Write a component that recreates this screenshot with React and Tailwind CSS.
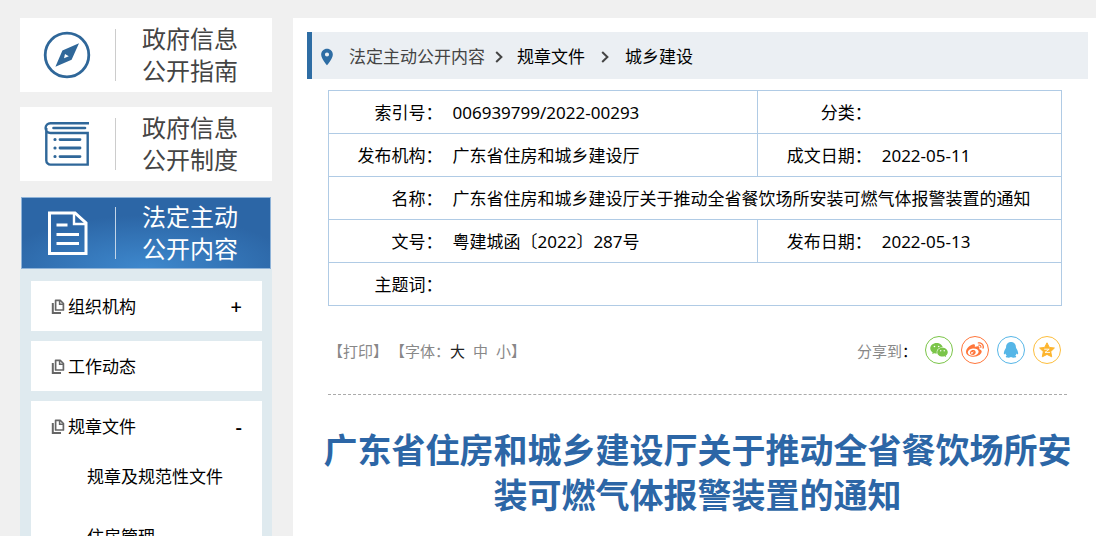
import React from "react";
import { MdLocationOn } from "react-icons/md";
import { FaWeibo } from "react-icons/fa";
import { AiFillWechat } from "react-icons/ai";

function CompassIcon() {
  return (
    <svg className="size-12" viewBox="0 0 48 48" fill="none" aria-hidden="true">
      <circle cx="24" cy="24" r="21.8" stroke="#2f6799" strokeWidth="2.8" />
      <path
        fillRule="evenodd"
        fill="#2f6799"
        d="M36 12.2 28.6 28.8 12.4 35.8 19.4 19.4ZM22 23 21 27.2 25.8 25.2Z"
      />
    </svg>
  );
}

function BookIcon() {
  return (
    <svg className="size-12" viewBox="0 0 48 48" fill="none" stroke="#2f6799" strokeWidth="2.4" aria-hidden="true">
      <path d="M46 3.2H7.5a4.8 4.8 0 0 0 0 9.8h37.2v31.6H7.6a4.2 4.2 0 0 1-4.3-4.2V8" />
      <path d="M10.5 8h31.500" strokeWidth="2.6" strokeLinecap="round" />
      <path d="M17 19.600h20M17 28h20M17 36.600h20" strokeWidth="2.800" strokeLinecap="round" />
      <path d="M11.900 19.600h.2M11.900 28h.2M11.900 36.600h.2" strokeWidth="3" strokeLinecap="round" />
    </svg>
  );
}

function DocumentIcon() {
  return (
    <svg className="size-12" viewBox="0 0 48 48" fill="none" stroke="#fff" strokeWidth="3" aria-hidden="true">
      <path d="M32 4H6.500v40.500h36.500V14Z" />
      <path d="M31 4v11h12" strokeWidth="2.400" />
      <path d="M13.500 16h11M13.500 25.500h22.500M13.500 34.500h22.500" strokeWidth="2.800" />
    </svg>
  );
}

function PagesIcon() {
  return (
    <svg className="h-4 w-3.5 shrink-0" viewBox="0 0 14 16" fill="none" stroke="#666" aria-hidden="true">
      <path d="M4.600 1.300h4.600l3.200 3.200v6.500H4.600Z" strokeWidth="1.700" strokeLinejoin="round" />
      <path d="M8.600 1v4.200h3.800" strokeWidth="1.500" />
      <path d="M1.800 4v10h8.200" strokeWidth="2" />
    </svg>
  );
}

function Chevron() {
  return (
    <svg className="h-3 w-2" viewBox="0 0 8 12" fill="none" stroke="#444" strokeWidth="2" aria-hidden="true">
      <path d="M1.200 1 6.400 6 1.200 11" />
    </svg>
  );
}

function PenguinIcon() {
  return (
    <svg className="size-4" viewBox="0 0 16 16" fill="#56b6e7" aria-hidden="true">
      <path d="M8 0C5 0 3.100 2.200 3.100 5c0 .8-.3 1.300-.8 2.100C1.300 8.800.7 10.300.9 12c.1.600.8.400 1.500-.5.3.9.8 1.500 1.400 2-.9.4-1.200 1-.9 1.600.3.700 3.700 1 5.100-.1 1.400 1.100 4.800.8 5.100.1.300-.6 0-1.200-.9-1.600.600-.5 1.100-1.100 1.400-2 .7.9 1.400 1.100 1.500.5.2-1.700-.4-3.200-1.400-4.900-.5-.8-.8-1.300-.8-2.100C12.900 2.200 11 0 8 0Z" />
    </svg>
  );
}

function StarIcon() {
  return (
    <svg className="size-4" viewBox="0 0 16 16" aria-hidden="true">
      <path
        fill="#fdb52e"
        stroke="#fdb52e"
        strokeLinejoin="round"
        d="M8 .8 10.300 5.400 15.400 6 11.700 9.600 12.700 14.800 8 12.400 3.300 14.800 4.300 9.600.6 6 5.700 5.400Z"
      />
      <path d="M5.200 7.200h5L6 10.400h5" fill="none" stroke="#fff" strokeWidth=".9" />
    </svg>
  );
}

function SideCard({ icon, lines }) {
  return (
    <a href="#" className="flex h-[74px] items-center bg-white text-[#444]">
      <span className="flex w-[95px] justify-center pr-0.5">{icon}</span>
      <span className="h-[52px] w-px bg-[#ccc]" />
      <span className="flex-1 pl-[26px] text-2xl leading-8">
        {lines[0]}
        <br />
        {lines[1]}
      </span>
    </a>
  );
}

function MenuRow({ label, sign }) {
  return (
    <button type="button" className="flex h-[50px] w-full items-center gap-[3px] pt-0.5 pr-5 pl-5 text-left">
      <PagesIcon />
      <span className="flex-1">{label}</span>
      {sign && <span className="text-xl leading-none font-medium">{sign}</span>}
    </button>
  );
}

function ShareButton({ label, className, children }) {
  return (
    <button
      type="button"
      aria-label={label}
      className={`flex size-7 items-center justify-center rounded-full border ${className}`}
    >
      {children}
    </button>
  );
}

const labelCell = "pt-0.5 text-right font-normal whitespace-nowrap";
const valueCell = "pt-0.5 pl-[10px] text-left whitespace-nowrap";
const rowLine = "h-[43px] border border-[#b0cbe5]";

export default function App() {
  return (
    <div className="flex h-screen items-stretch gap-[21px] overflow-hidden bg-[#f0f0f0] pt-[18px] pl-5 font-['Noto_Sans','Noto_Sans_CJK_SC',sans-serif] text-[17px] leading-6 text-black">
      <aside className="w-[252px] shrink-0">
        <nav className="flex flex-col gap-[15px]">
          <SideCard icon={<CompassIcon />} lines={["政府信息", "公开指南"]} />
          <SideCard icon={<BookIcon />} lines={["政府信息", "公开制度"]} />
          <div className="bg-[#dfeaef]">
            <div className="bg-[#f0f0f0] px-px pt-px">
              <a
                href="#"
                className="flex h-[72px] items-center border border-[#8fb3d8] bg-[#2c66a6] bg-[radial-gradient(ellipse_60%_75%_at_50%_100%,#3e88cd,#2c66a6)] text-white"
              >
                <span className="flex w-[93px] justify-center pr-1">
                  <DocumentIcon />
                </span>
                <span className="h-[52px] w-px bg-[#c3d5e8]" />
                <span className="flex-1 pl-[26px] text-2xl leading-8">
                  法定主动
                  <br />
                  公开内容
                </span>
              </a>
            </div>
            <ul className="flex flex-col gap-[10px] pt-3 pr-[10px] pl-[11px]">
              <li className="bg-white">
                <MenuRow label="组织机构" sign="+" />
              </li>
              <li className="bg-white">
                <MenuRow label="工作动态" />
              </li>
              <li className="bg-white">
                <MenuRow label="规章文件" sign="-" />
                <ul className="pl-14">
                  <li className="pt-[14px] pb-[22px]">
                    <a href="#">规章及规范性文件</a>
                  </li>
                  <li className="pt-[14px] pb-[22px]">
                    <a href="#">住房管理</a>
                  </li>
                </ul>
              </li>
            </ul>
          </div>
        </nav>
      </aside>

      <main className="min-w-0 flex-1 bg-white pt-[14px] pr-2 pl-[14px]">
        <nav className="flex h-[47px] items-center border-l-[5px] border-[#2e6da4] bg-[#ebeff3] pt-[3px] pl-[5px]">
          <MdLocationOn className="size-5 text-[#2e6da4]" aria-hidden="true" />
          <a href="#" className="ml-3 text-[#444]">
            法定主动公开内容
          </a>
          <span className="mr-[14px] ml-[10px]">
            <Chevron />
          </span>
          <a href="#">规章文件</a>
          <span className="mx-4">
            <Chevron />
          </span>
          <a href="#">城乡建设</a>
        </nav>

        <div className="mx-[21px]">
          <div className="mt-[11px] pr-[5px]">
            <table className="w-full table-fixed border-collapse">
              <colgroup>
                <col className="w-[114px]" />
                <col className="w-[43%]" />
                <col className="w-[114px]" />
                <col />
              </colgroup>
              <tbody>
                <tr className={rowLine}>
                  <th className={labelCell}>索引号：</th>
                  <td className={valueCell}>006939799/2022-00293</td>
                  <th className={`border-l border-[#b0cbe5] ${labelCell}`}>分类：</th>
                  <td className={valueCell} />
                </tr>
                <tr className={rowLine}>
                  <th className={labelCell}>发布机构：</th>
                  <td className={valueCell}>广东省住房和城乡建设厅</td>
                  <th className={`border-l border-[#b0cbe5] ${labelCell}`}>成文日期：</th>
                  <td className={valueCell}>2022-05-11</td>
                </tr>
                <tr className={rowLine}>
                  <th className={labelCell}>名称：</th>
                  <td colSpan={3} className={valueCell}>
                    广东省住房和城乡建设厅关于推动全省餐饮场所安装可燃气体报警装置的通知
                  </td>
                </tr>
                <tr className={rowLine}>
                  <th className={labelCell}>文号：</th>
                  <td className={valueCell}>粤建城函〔2022〕287号</td>
                  <th className={`border-l border-[#b0cbe5] ${labelCell}`}>发布日期：</th>
                  <td className={valueCell}>2022-05-13</td>
                </tr>
                <tr className={rowLine}>
                  <th className={labelCell}>主题词：</th>
                  <td colSpan={3} className={valueCell} />
                </tr>
              </tbody>
            </table>
          </div>

          <div className="flex h-[89px] items-center justify-between border-b border-dashed border-[#aaa] pr-[6px] text-[15px] text-[#888]">
            <div className="flex items-center pt-0.5">
              <button type="button">【打印】</button>
              <span className="ml-0.5">【字体：</span>
              <button type="button" className="text-[#222]">
                大
              </button>
              <button type="button" className="ml-2">
                中
              </button>
              <button type="button" className="ml-2">
                小
              </button>
              <span>】</span>
            </div>
            <div className="flex items-center gap-2">
              <span className="pt-0.5">
                分享到<span className="text-black">：</span>
              </span>
              <ShareButton label="微信" className="border-[#7bc549] text-[#7bc549]">
                <AiFillWechat className="size-5" />
              </ShareButton>
              <ShareButton label="微博" className="border-[#ff763b] text-[#ff763b]">
                <FaWeibo className="size-[18px]" />
              </ShareButton>
              <ShareButton label="QQ" className="border-[#56b6e7]">
                <PenguinIcon />
              </ShareButton>
              <ShareButton label="QQ空间" className="border-[#fdbe3d]">
                <StarIcon />
              </ShareButton>
            </div>
          </div>
        </div>

        <h1 className="mx-3 mt-[33px] text-center text-[34px] leading-[45px] font-bold text-[#2c66a6]">
          广东省住房和城乡建设厅关于推动全省餐饮场所安装可燃气体报警装置的通知
        </h1>
      </main>
    </div>
  );
}
